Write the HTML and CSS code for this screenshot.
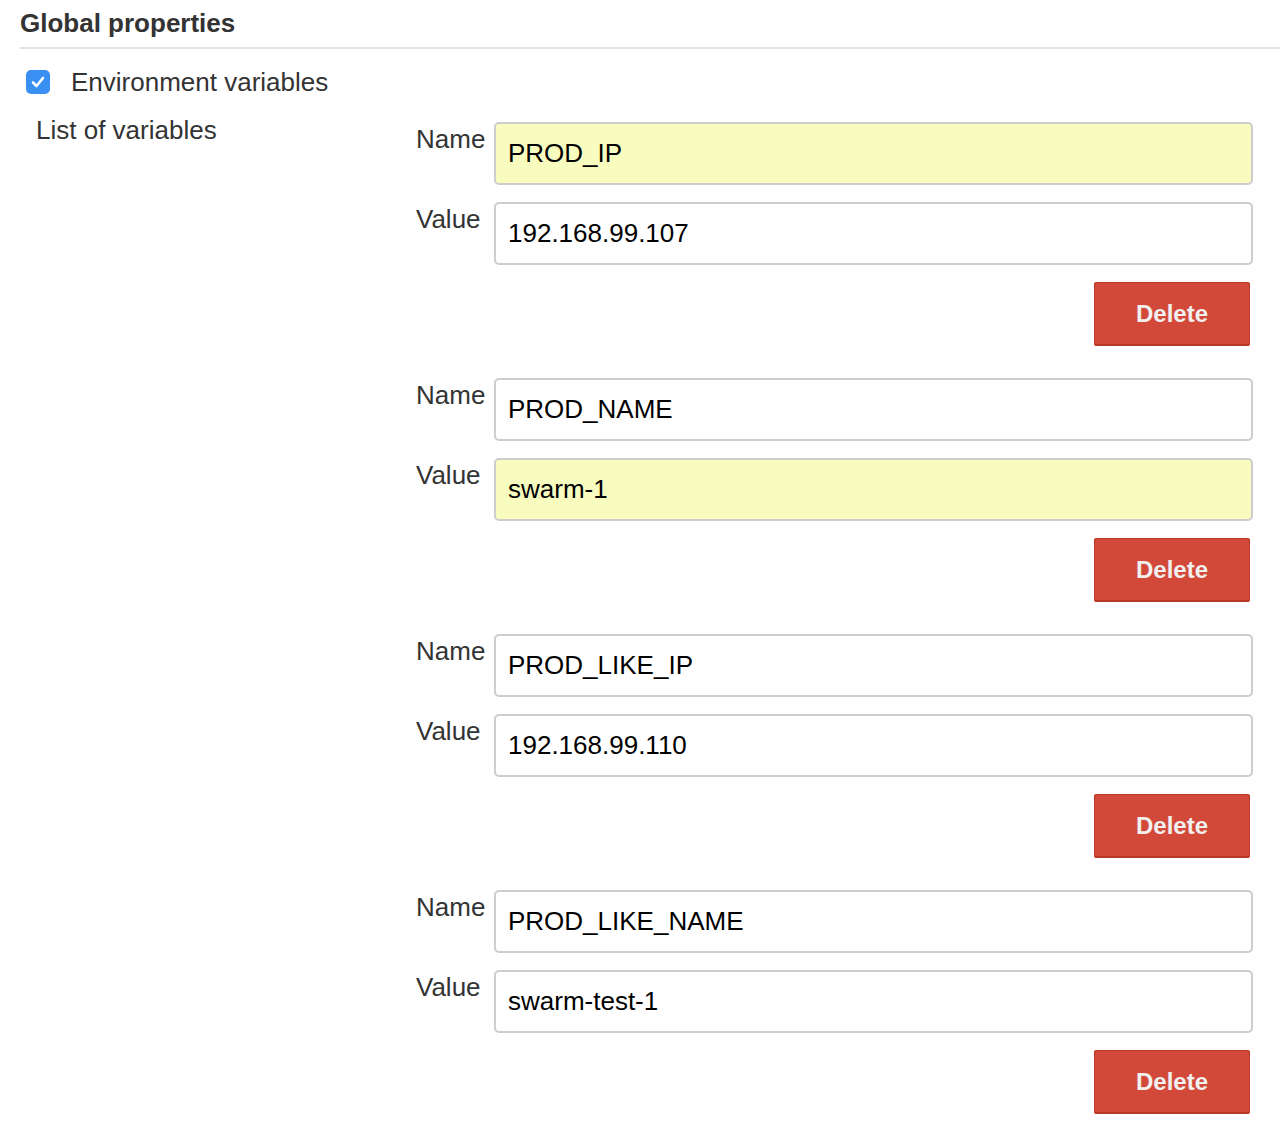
FILE: index.html
```html
<!DOCTYPE html>
<html>
<head>
<meta charset="utf-8">
<link rel="stylesheet" href="styles.css">
</head>
<body>
<div class="page">
  <h2 class="section-title">Global properties</h2>
  <label class="check-row">
    <span class="checkbox"><svg width="14" height="12" viewBox="0 0 14 12"><path d="M2 6.5 L5.5 10 L12 2" fill="none" stroke="#fff" stroke-width="2.6" stroke-linecap="round" stroke-linejoin="round"/></svg></span>
    <span class="check-label">Environment variables</span>
  </label>
  <div class="list">
    <div class="list-label">List of variables</div>
    <div class="entries">
      <div class="entry">
        <div class="field-label">Name</div>
        <div class="input highlight">PROD_IP</div>
        <div class="field-label">Value</div>
        <div class="input">192.168.99.107</div>
        <div class="actions"><button class="btn-delete">Delete</button></div>
      </div>
      <div class="entry">
        <div class="field-label">Name</div>
        <div class="input">PROD_NAME</div>
        <div class="field-label">Value</div>
        <div class="input highlight">swarm-1</div>
        <div class="actions"><button class="btn-delete">Delete</button></div>
      </div>
      <div class="entry">
        <div class="field-label">Name</div>
        <div class="input">PROD_LIKE_IP</div>
        <div class="field-label">Value</div>
        <div class="input">192.168.99.110</div>
        <div class="actions"><button class="btn-delete">Delete</button></div>
      </div>
      <div class="entry">
        <div class="field-label">Name</div>
        <div class="input">PROD_LIKE_NAME</div>
        <div class="field-label">Value</div>
        <div class="input">swarm-test-1</div>
        <div class="actions"><button class="btn-delete">Delete</button></div>
      </div>
    </div>
  </div>
</div>
</body>
</html>
```

FILE: styles.css
```css
html, body {
  margin: 0;
  padding: 0;
  background: #fff;
}
body {
  font-family: "Liberation Sans", Arial, sans-serif;
  color: #333;
}
.page {
  padding-left: 20px;
}
.section-title {
  margin: 0;
  font-size: 26px;
  font-weight: bold;
  line-height: 30px;
  padding-top: 8px;
  padding-bottom: 9px;
  border-bottom: 2px solid #e2e2e2;
  color: #333;
}
.check-row {
  display: flex;
  align-items: center;
  padding-left: 6px;
  margin-top: 20px;
  height: 26px;
}
.checkbox {
  width: 24px;
  height: 24px;
  border-radius: 5px;
  background: #3a8ff2;
  display: flex;
  align-items: center;
  justify-content: center;
}
.check-label {
  font-size: 26px;
  line-height: 30px;
  margin-left: 21px;
  color: #333;
}
.list {
  display: flex;
  margin-top: 20px;
}
.list-label {
  width: 380px;
  padding-left: 16px;
  box-sizing: border-box;
  font-size: 26px;
  line-height: 30px;
  color: #333;
}
.entries {
  flex: 1;
  padding-right: 27px;
  margin-left: 16px;
  margin-top: 7px;
}
.entry {
  display: grid;
  grid-template-columns: 78px 1fr;
  row-gap: 17px;
  margin-bottom: 32px;
}
.field-label {
  font-size: 26px;
  line-height: 30px;
  padding-top: 2px;
  color: #333;
}
.input {
  height: 63px;
  box-sizing: border-box;
  border: 2px solid #cdcdcd;
  border-radius: 5px;
  padding-left: 12px;
  font-size: 26px;
  display: flex;
  align-items: center;
  color: #000;
  background: #fff;
}
.input.highlight {
  background: #f8fcbf;
}
.actions {
  grid-column: 1 / 3;
  display: flex;
  justify-content: flex-end;
  padding-right: 3px;
}
.btn-delete {
  width: 156px;
  height: 64px;
  background: #d24939;
  border: 1px solid #b8372a;
  border-bottom-width: 2px;
  border-radius: 2px;
  color: #f0f0f0;
  font-family: "Liberation Sans", Arial, sans-serif;
  font-weight: bold;
  font-size: 24px;
  padding: 0;
}
```
